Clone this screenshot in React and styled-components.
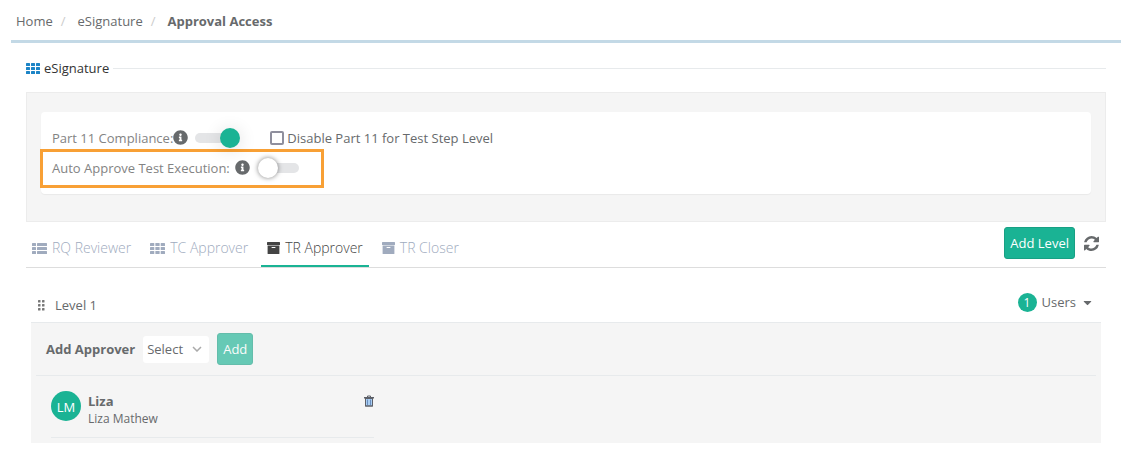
import React, { useState } from 'react';
import styled, { createGlobalStyle } from 'styled-components';
import { FaInfoCircle, FaCaretDown } from 'react-icons/fa';

const GlobalStyle = createGlobalStyle`
    * {
        box-sizing: border-box;
    }
    body {
        margin: 0;
        background: #fff;
        color: #676a6c;
        font-family: "Open Sans", "Noto Sans", sans-serif;
        font-size: 13px;
        line-height: 20px;
    }
    button, select, input {
        font: inherit;
        margin: 0;
    }
`;

const GridIcon = ({ size = 14 }) => (
    <svg width={size} height="11" viewBox="0 0 14 11" preserveAspectRatio="none" fill="currentColor" aria-hidden="true">
        {[0, 4, 8].map((y) => [0, 5, 10].map((x) => (
            <rect key={`${x}-${y}`} x={x} y={y} width="4" height="3" rx="0.5" />
        )))}
    </svg>
);

const ListIcon = () => (
    <svg width="15" height="11" viewBox="0 0 15 11" fill="currentColor" aria-hidden="true">
        {[0, 4, 8].map((y) => (
            <g key={y}>
                <rect x="0" y={y} width="4" height="3" rx="0.5" />
                <rect x="5" y={y} width="10" height="3" rx="0.5" />
            </g>
        ))}
    </svg>
);

const ArchiveIcon = () => (
    <svg width="13" height="12" viewBox="0 0 13 12" fill="currentColor" aria-hidden="true">
        <rect width="13" height="3" rx="0.5" />
        <path fillRule="evenodd" d="M.6 3.500h11.800v8a.5.5 0 0 1-.5.500H1.100a.5.500 0 0 1-.5-.500zM5 5a.5.5 0 0 0 0 1h3a.5.5 0 0 0 0-1z" />
    </svg>
);

const RefreshIcon = () => (
    <svg width="15" height="15" viewBox="0 0 1536 1536" fill="currentColor" aria-hidden="true">
        <path d="M1511 928q0 5-1 7-64 268-268 434.500t-478 166.500q-146 0-282.500-55t-243.500-157l-129 129q-19 19-45 19t-45-19-19-45v-448q0-26 19-45t45-19h448q26 0 45 19t19 45-19 45l-137 137q71 66 161 102t187 36q134 0 250-65t186-179q11-17 53-117 8-23 30-23h192q13 0 22.500 9.500t9.500 22.500zm25-800v448q0 26-19 45t-45 19h-448q-26 0-45-19t-19-45 19-45l138-138q-148-137-349-137-134 0-250 65t-186 179q-11 17-53 117-8 23-30 23h-199q-13 0-22.500-9.500t-9.500-22.500v-7q65-268 270-434.500t480-166.500q146 0 284 55.500t245 156.500l130-129q19-19 45-19t45 19 19 45z" />
    </svg>
);

const DragIcon = () => (
    <svg width="7" height="11" viewBox="0 0 7 11" fill="#777" aria-hidden="true">
        {[0, 4, 8].map((y) => [0, 4].map((x) => (
            <rect key={`${x}-${y}`} x={x} y={y} width="2.500" height="2.500" rx="0.5" />
        )))}
    </svg>
);

const TrashIcon = () => (
    <svg width="10" height="12" viewBox="0 0 10 12" aria-hidden="true">
        <path d="M3.500 2V1h3v1" fill="none" stroke="#5d6068" />
        <rect y="2" width="10" height="1.500" fill="#5d6068" />
        <rect x="1.500" y="3.500" width="7" height="7.500" fill="#a9cdf2" stroke="#5d6068" />
        <path d="M3.500 4.500v5.500M6.500 4.500v5.500" stroke="#6b8fc0" />
        <path d="M1.500 11h7" stroke="#5d6068" />
    </svg>
);

const tabs = [
    { name: 'RQ Reviewer', icon: <ListIcon /> },
    { name: 'TC Approver', icon: <GridIcon size={15} /> },
    { name: 'TR Approver', icon: <ArchiveIcon /> },
    { name: 'TR Closer', icon: <ArchiveIcon /> },
];

export default function App() {
    const [active, setActive] = useState('TR Approver');

    return (
        <Page>
            <GlobalStyle />
            <Breadcrumb aria-label="Breadcrumb">
                <a href="#home">Home</a>
                <a href="#esignature">eSignature</a>
                <strong>Approval Access</strong>
            </Breadcrumb>
            <Content>
                <SectionTitle>
                    <GridIcon />
                    eSignature
                </SectionTitle>
                <SettingsPanel>
                    <SettingsCard>
                        <SettingRow>
                            <SettingLabel htmlFor="part11">Part 11 Compliance:</SettingLabel>
                            <FaInfoCircle size={15} />
                            <Switch id="part11" defaultChecked />
                            <CheckLabel>
                                <CheckBox />
                                Disable Part 11 for Test Step Level
                            </CheckLabel>
                        </SettingRow>
                        <SettingRow $highlight>
                            <SettingLabel htmlFor="autoApprove" $gap={5}>Auto Approve Test Execution:</SettingLabel>
                            <FaInfoCircle size={15} />
                            <Switch id="autoApprove" />
                        </SettingRow>
                    </SettingsCard>
                </SettingsPanel>
                <TabBar>
                    <TabList role="tablist">
                        {tabs.map((tab) => (
                            <Tab
                                key={tab.name}
                                role="tab"
                                aria-selected={active === tab.name}
                                $active={active === tab.name}
                                onClick={() => setActive(tab.name)}
                            >
                                {tab.icon}
                                {tab.name}
                            </Tab>
                        ))}
                    </TabList>
                    <Actions>
                        <Button>Add Level</Button>
                        <IconButton aria-label="Refresh">
                            <RefreshIcon />
                        </IconButton>
                    </Actions>
                </TabBar>
                <Level>
                    <LevelHeader>
                        <DragIcon />
                        <LevelName>Level 1</LevelName>
                        <UsersToggle>
                            <Badge>1</Badge>
                            Users
                            <FaCaretDown size={13} />
                        </UsersToggle>
                    </LevelHeader>
                    <LevelBody>
                        <ApproverForm>
                            <label htmlFor="approver">Add Approver</label>
                            <Select id="approver">
                                <option>Select</option>
                            </Select>
                            <Button $faded>Add</Button>
                        </ApproverForm>
                        <UserRow>
                            <Avatar>LM</Avatar>
                            <UserText>
                                <strong>Liza</strong>
                                <small>Liza Mathew</small>
                            </UserText>
                            <IconButton aria-label="Delete">
                                <TrashIcon />
                            </IconButton>
                        </UserRow>
                    </LevelBody>
                </Level>
            </Content>
        </Page>
    );
}

const Page = styled.main`
    padding: 0 12px 19px 11px;
`;

const Breadcrumb = styled.nav`
    display: flex;
    align-items: center;
    height: 43px;
    padding: 2px 5px 0;
    border-bottom: 3px solid #c3d9e6;
    a {
        color: inherit;
        text-decoration: none;
    }
    a::after {
        content: "/";
        padding: 0 12px 0 8px;
        color: #ccc;
    }
`;

const Content = styled.div`
    padding: 0 15px;
`;

const SectionTitle = styled.h2`
    display: flex;
    align-items: center;
    gap: 4px;
    margin: 15px 0 14px;
    color: #333;
    font-size: 13px;
    font-weight: 400;
    svg {
        color: #1c84c6;
    }
    &::after {
        content: "";
        flex: 1;
        height: 1px;
        background: #e7eaec;
    }
`;

const SettingsPanel = styled.section`
    padding: 19px 14px 27px;
    background: #f5f5f5;
    border: 1px solid #ececec;
`;

const SettingsCard = styled.div`
    padding: 13px 2px 9px;
    background: #fff;
    border-radius: 4px;
    box-shadow: 0 1px 1px rgba(0, 0, 0, 0.05);
`;

const SettingRow = styled.div`
    display: flex;
    align-items: center;
    width: fit-content;
    height: ${(props) => (props.$highlight ? '33px' : '27px')};
    padding: 0 22px 2px 9px;
    outline: ${(props) => (props.$highlight ? '3px solid #f8a035' : 'none')};
`;

const SettingLabel = styled.label`
    margin-right: ${(props) => props.$gap || 0}px;
    color: #838383;
    font-weight: 500;
`;

const Switch = styled.input.attrs({ type: 'checkbox', role: 'switch' })`
    appearance: none;
    position: relative;
    width: 34px;
    height: 10px;
    margin-left: ${(props) => (props.defaultChecked ? '7px' : '15px')};
    border-radius: 5px;
    background: #e4e5e7;
    cursor: pointer;
    &::before {
        content: "";
        position: absolute;
        top: -5px;
        left: -7px;
        width: 20px;
        height: 20px;
        border-radius: 50%;
        background: #fff;
        box-shadow: 0 0 5px rgba(0, 0, 0, 0.5);
    }
    &:checked::before {
        left: 25px;
        background: #1ab394;
        box-shadow: 0 2px 18px rgba(0, 0, 0, 0.14);
    }
`;

const CheckLabel = styled.label`
    display: flex;
    align-items: center;
    gap: 3px;
    margin-left: 41px;
`;

const CheckBox = styled.input.attrs({ type: 'checkbox' })`
    appearance: none;
    width: 14px;
    height: 14px;
    border: 2px solid #8f8f9d;
    border-radius: 2px;
    background: #fff;
    &:checked {
        background: #1ab394;
    }
`;

const TabBar = styled.div`
    display: flex;
    align-items: flex-end;
    justify-content: space-between;
    height: 46px;
    border-bottom: 1px solid #ddd;
`;

const TabList = styled.div`
    display: flex;
    gap: 7px;
`;

const Tab = styled.button`
    display: flex;
    align-items: center;
    gap: 5px;
    height: 38px;
    padding: 2px 6px 0;
    border: 0;
    border-bottom: 2px solid ${(props) => (props.$active ? '#1ab394' : 'transparent')};
    background: none;
    color: ${(props) => (props.$active ? '#444' : '#a0abbe')};
    font-size: 14px;
    font-weight: 300;
    cursor: pointer;
`;

const Actions = styled.div`
    display: flex;
    align-items: center;
    gap: 9px;
    padding: 0 7px 8px 0;
`;

const Button = styled.button`
    height: 32px;
    padding: 0 5px;
    border: 1px solid #18a084;
    border-radius: 3px;
    background: #1ab394;
    color: #fff;
    opacity: ${(props) => (props.$faded ? 0.65 : 1)};
    cursor: pointer;
`;

const IconButton = styled.button`
    display: flex;
    padding: 0;
    border: 0;
    background: none;
    color: #676a6c;
    cursor: pointer;
`;

const Level = styled.section`
    padding: 20px 5px 0;
`;

const LevelHeader = styled.header`
    display: flex;
    align-items: center;
    height: 35px;
    padding: 0 7px;
    border-bottom: 1px solid #e7eaec;
`;

const LevelName = styled.span`
    flex: 1;
    margin-left: 10px;
`;

const UsersToggle = styled.button`
    display: flex;
    align-items: center;
    gap: 5px;
    padding: 0 0 6px;
    border: 0;
    background: none;
    color: inherit;
    cursor: pointer;
`;

const Badge = styled.span`
    width: 19px;
    height: 19px;
    border-radius: 50%;
    background: #1ab394;
    color: #fff;
    font-size: 12px;
    line-height: 19px;
    text-align: center;
`;

const LevelBody = styled.div`
    padding: 0 5px 5px;
    background: #f5f5f5;
`;

const ApproverForm = styled.form.attrs({ onSubmit: (e) => e.preventDefault() })`
    display: flex;
    align-items: center;
    gap: 8px;
    height: 53px;
    padding: 0 10px;
    border-bottom: 1px solid #e7eaec;
    label {
        font-weight: 700;
    }
`;

const Select = styled.select`
    appearance: none;
    width: 66px;
    height: 27px;
    padding: 0 4px;
    border: 0;
    border-radius: 3px;
    color: inherit;
    background: #fff url("data:image/svg+xml,%3Csvg xmlns='http://www.w3.org/2000/svg' width='10' height='6' fill='none' stroke='%23aaa' stroke-width='1.500'%3E%3Cpath d='M1 1l4 4 4-4'/%3E%3C/svg%3E") no-repeat right 7px center;
`;

const UserRow = styled.div`
    display: flex;
    align-items: flex-start;
    width: 323px;
    max-width: 100%;
    margin: 15px 15px 0;
    padding-bottom: 9px;
    border-bottom: 1px solid #e7eaec;
    button {
        margin-top: 4px;
    }
`;

const Avatar = styled.span`
    width: 30px;
    height: 30px;
    border-radius: 50%;
    background: #1ab394;
    color: #fff;
    line-height: 32px;
    text-align: center;
`;

const UserText = styled.div`
    display: flex;
    flex: 1;
    flex-direction: column;
    margin-left: 7px;
    padding-top: 1px;
    line-height: 18px;
    small {
        font-size: 12px;
    }
`;
